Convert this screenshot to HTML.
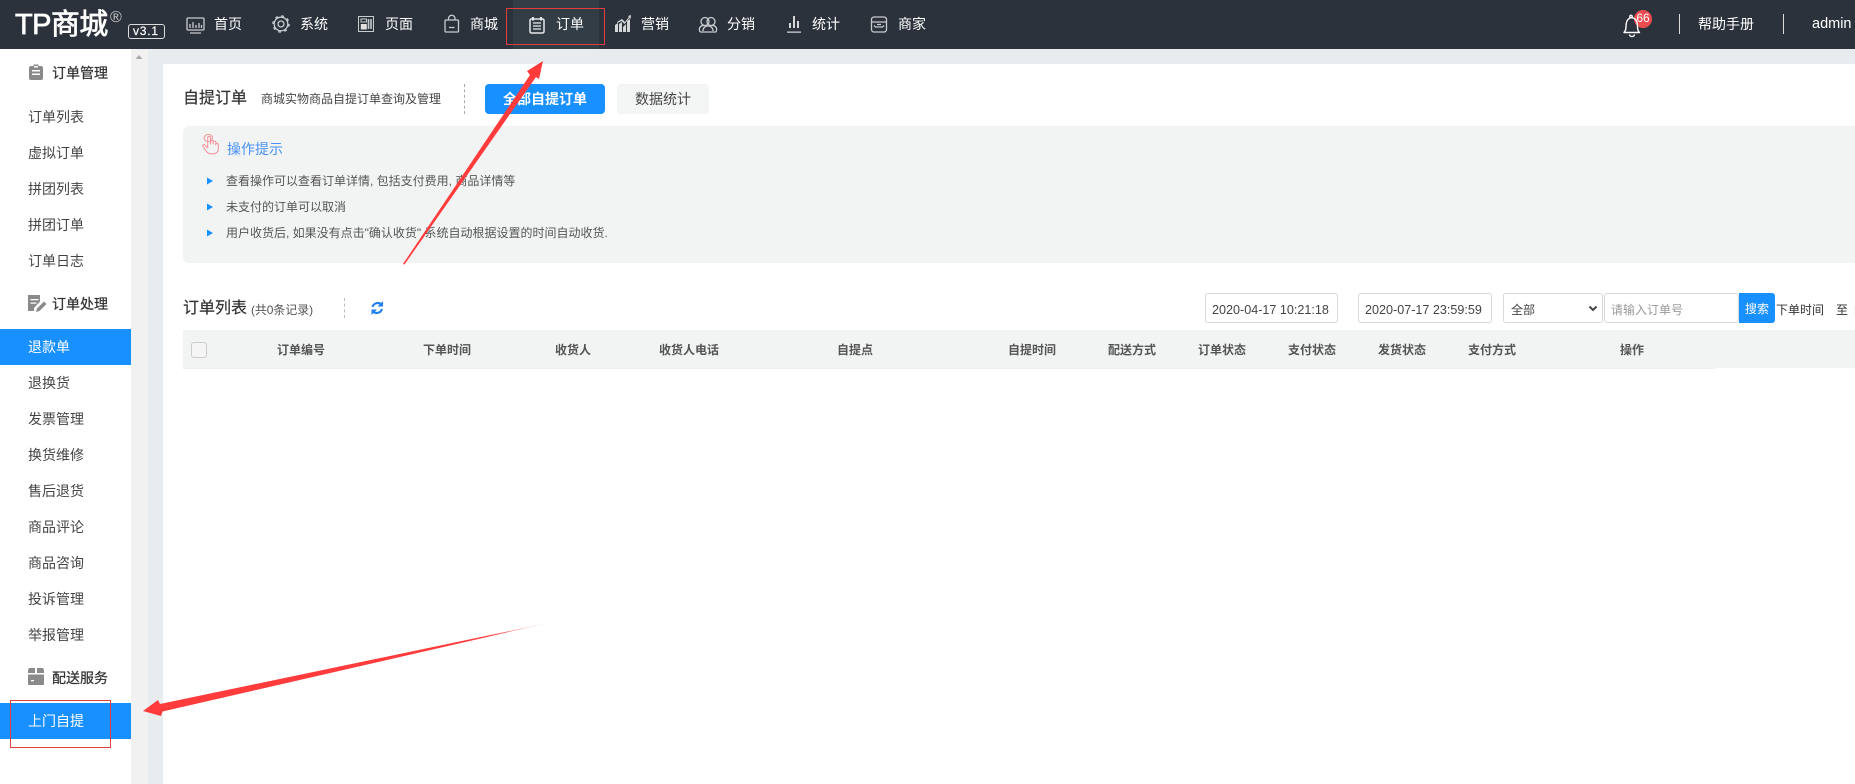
<!DOCTYPE html>
<html lang="zh-CN">
<head>
<meta charset="utf-8">
<title>自提订单</title>
<style>
html,body{margin:0;padding:0;width:1855px;height:784px;overflow:hidden;background:#fff}
body{position:relative;font-family:"Liberation Sans","Noto Sans CJK SC",sans-serif;color:#333}
div,span{position:absolute;white-space:nowrap}
.n{color:#fff;font-size:14px;line-height:20px;top:14px}
.s{font-size:14px;line-height:20px;left:28px;color:#444}
.h{font-size:14px;line-height:20px;left:52px;color:#333;-webkit-text-stroke:.25px #333}
.a{background:#1890ff;left:0;width:131px;height:36px}
.l{font-size:12px;line-height:16px;left:226px;color:#555}
.th{font-size:12px;line-height:16px;top:342px;color:#555;font-weight:700}
.i{height:28px;top:293px;border:1px solid #d9d9d9;border-radius:3px;background:#fff}
.d{font-size:12.6px;line-height:16px;top:302px;color:#444}
svg{position:absolute;left:0;top:0}
</style>
</head>
<body>
<div style="left:0;top:0;width:1855px;height:49px;background:#2b323b"></div>
<div style="left:513px;top:0;width:86px;height:49px;background:#323d46"></div>
<div style="left:131px;top:49px;width:17px;height:735px;background:#f1f1f1"></div>
<div style="left:148px;top:49px;width:15px;height:735px;background:#e9ecef"></div>
<div style="left:148px;top:49px;width:1707px;height:15px;background:#e9ecef"></div>

<span style="left:15px;top:7px;font-size:29px;line-height:36px;color:#fff;letter-spacing:-.6px;-webkit-text-stroke:.7px #fff">TP商城</span>
<span style="left:110px;top:9px;font-size:16px;line-height:18px;color:#ccc">®</span>
<div style="left:128px;top:24px;width:35px;height:13px;border:1px solid #ddd;border-radius:3px"></div>
<span style="left:133px;top:23px;font-size:12px;line-height:16px;color:#fff;letter-spacing:.8px;-webkit-text-stroke:.2px #fff">v3.1</span>

<span class="n" style="left:214px">首页</span>
<span class="n" style="left:300px">系统</span>
<span class="n" style="left:385px">页面</span>
<span class="n" style="left:470px">商城</span>
<span class="n" style="left:556px">订单</span>
<span class="n" style="left:641px">营销</span>
<span class="n" style="left:727px">分销</span>
<span class="n" style="left:812px">统计</span>
<span class="n" style="left:898px">商家</span>
<span class="n" style="left:1698px">帮助手册</span>
<span class="n" style="left:1812px;font-size:14.5px">admin</span>
<div style="left:1679px;top:14px;width:1px;height:20px;background:#ddd"></div>
<div style="left:1783px;top:14px;width:1px;height:20px;background:#ddd"></div>
<div style="left:1634px;top:10px;width:18px;height:18px;border-radius:50%;background:#ea4d50"></div>
<span style="left:1634px;top:11px;width:18px;text-align:center;font-size:12px;line-height:15px;color:#fff">66</span>

<span class="h" style="top:63px">订单管理</span>
<span class="s" style="top:107px">订单列表</span>
<span class="s" style="top:143px">虚拟订单</span>
<span class="s" style="top:179px">拼团列表</span>
<span class="s" style="top:215px">拼团订单</span>
<span class="s" style="top:251px">订单日志</span>
<span class="h" style="top:294px">订单处理</span>
<div class="a" style="top:329px"></div>
<span class="s" style="top:337px;color:#fff">退款单</span>
<span class="s" style="top:373px">退换货</span>
<span class="s" style="top:409px">发票管理</span>
<span class="s" style="top:445px">换货维修</span>
<span class="s" style="top:481px">售后退货</span>
<span class="s" style="top:517px">商品评论</span>
<span class="s" style="top:553px">商品咨询</span>
<span class="s" style="top:589px">投诉管理</span>
<span class="s" style="top:625px">举报管理</span>
<span class="h" style="top:668px">配送服务</span>
<div class="a" style="top:703px"></div>
<span class="s" style="top:711px;color:#fff">上门自提</span>

<span style="left:183px;top:88px;font-size:16px;line-height:22px;color:#333;-webkit-text-stroke:.2px #333">自提订单</span>
<span style="left:261px;top:91px;font-size:12px;line-height:16px;color:#444">商城实物商品自提订单查询及管理</span>
<div style="left:464px;top:84px;height:30px;width:0;border-left:1px dashed #aaa"></div>
<div style="left:485px;top:84px;width:120px;height:30px;background:#1890ff;border-radius:4px"></div>
<span style="left:485px;top:89px;width:120px;text-align:center;font-size:14px;line-height:20px;color:#fff;font-weight:700">全部自提订单</span>
<div style="left:617px;top:84px;width:92px;height:30px;background:#f4f5f5;border-radius:4px"></div>
<span style="left:617px;top:89px;width:92px;text-align:center;font-size:14px;line-height:20px;color:#444">数据统计</span>

<div style="left:183px;top:126px;width:1690px;height:137px;background:#f2f4f4;border-radius:6px"></div>
<span style="left:227px;top:139px;font-size:14px;line-height:20px;color:#4a90f5">操作提示</span>
<span class="l" style="top:173px">查看操作可以查看订单详情, 包括支付费用, 商品详情等</span>
<span class="l" style="top:199px">未支付的订单可以取消</span>
<span class="l" style="top:225px">用户收货后, 如果没有点击"确认收货",系统自动根据设置的时间自动收货.</span>

<span style="left:183px;top:298px;font-size:16px;line-height:22px;color:#333;-webkit-text-stroke:.2px #333">订单列表</span>
<span style="left:251px;top:302px;font-size:12px;line-height:16px;color:#555;letter-spacing:-.1px">(共0条记录)</span>
<div style="left:344px;top:298px;height:20px;width:0;border-left:1px dashed #bbb"></div>

<div class="i" style="left:1205px;width:131px"></div>
<span class="d" style="left:1212px">2020-04-17 10:21:18</span>
<div class="i" style="left:1358px;width:132px"></div>
<span class="d" style="left:1365px">2020-07-17 23:59:59</span>
<div class="i" style="left:1503px;width:98px"></div>
<span class="d" style="left:1511px;font-size:12px">全部</span>
<div class="i" style="left:1604px;width:133px"></div>
<span class="d" style="left:1611px;font-size:12px;color:#999">请输入订单号</span>
<div style="left:1739px;top:293px;width:36px;height:30px;background:#1890ff;border-radius:0 3px 3px 0"></div>
<span style="left:1745px;top:301px;font-size:12px;line-height:16px;color:#fff">搜索</span>
<span style="left:1776px;top:302px;font-size:12px;line-height:16px;color:#333">下单时间</span>
<span style="left:1836px;top:302px;font-size:12px;line-height:16px;color:#333">至</span>
<span style="left:1853px;top:302px;font-size:12px;line-height:16px;color:#333">自</span>

<div style="left:183px;top:330px;width:1672px;height:38px;background:#f2f4f4"></div>
<div style="left:183px;top:368px;width:1532px;height:1px;background:#f0eeee"></div>
<div style="left:191px;top:342px;width:14px;height:14px;border:1px solid #ccc;border-radius:3px;background:#f5f5f5"></div>
<span class="th" style="left:277px">订单编号</span>
<span class="th" style="left:423px">下单时间</span>
<span class="th" style="left:555px">收货人</span>
<span class="th" style="left:659px">收货人电话</span>
<span class="th" style="left:837px">自提点</span>
<span class="th" style="left:1008px">自提时间</span>
<span class="th" style="left:1108px">配送方式</span>
<span class="th" style="left:1198px">订单状态</span>
<span class="th" style="left:1288px">支付状态</span>
<span class="th" style="left:1378px">发货状态</span>
<span class="th" style="left:1468px">支付方式</span>
<span class="th" style="left:1620px">操作</span>

<div style="left:506px;top:8px;width:97px;height:35px;border:1px solid #e33d3d"></div>
<div style="left:10px;top:700px;width:99px;height:46px;border:1px solid #e33d3d"></div>

<svg width="1855" height="784" viewBox="0 0 1855 784">
<defs>
<linearGradient id="fade" gradientUnits="userSpaceOnUse" x1="548" y1="623" x2="490" y2="636">
<stop offset="0" stop-color="#ff3b3b" stop-opacity=".1"/><stop offset="1" stop-color="#ff3b3b"/>
</linearGradient>
</defs>
<!-- nav icons -->
<g fill="none" stroke="#c9cccf" stroke-width="1.3">
<rect x="187" y="18" width="17" height="12" rx="1"/>
<path d="M190 28v-4M193 28v-6M196 28v-3M199 28v-5M201.500 28v-3M190 33h11"/>
<circle cx="281" cy="24" r="6.800"/>
<circle cx="281" cy="24" r="8" stroke-width="1.500" stroke-dasharray="2.700 3.580"/>
<circle cx="281" cy="24" r="3"/>
<rect x="358.500" y="16.500" width="15" height="15" stroke-width="1"/>
<path d="M368.500 19v10M371 19v10" stroke-width="1.600"/>
<rect x="360.800" y="24" width="6" height="5.500" fill="#e0e0e0" stroke="none"/>
<rect x="361" y="19" width="5.500" height="3" stroke-width="1"/>
<rect x="445" y="20" width="13.500" height="12" rx="1"/>
<path d="M448.500 20v-1.500a3.200 3.200 0 0 1 6.500 0V20M449 27.500h5.500"/>
</g>
<g fill="none" stroke="#e6e8ea" stroke-width="1.500">
<rect x="530" y="19" width="14" height="14" rx="1.500"/>
<path d="M533 17v3.500M541 17v3.500" stroke-width="2"/>
<path d="M533 23h8M533 26h8M533 29h8" stroke-width="1.300"/>
</g>
<g fill="#d5d7d9" stroke="none">
<path d="M615 25l3-2v9h-3zM619 24l3-2v10h-3zM623 27l3-3v8h-3zM627 21l3-2v13h-3z"/>
<path d="M617 22l5-3 3 3 4-5-1-1 3-1-.5 4-1-1-5 6-3-3-4 2z"/>
<path d="M787 31.500h14v1.300h-14zM793 16h2v12h-2zM789 23h2v5h-2zM797 21h2v7h-2z"/>
</g>
<g fill="none" stroke="#c9cccf" stroke-width="1.300">
<circle cx="705" cy="21.500" r="4"/><circle cx="711" cy="21.500" r="4"/>
<path d="M700 32c-2-4 1-7 4-6.500M716 32c2-4-1-7-4-6.500M700 32h16M703 31c0-3 2-5 5-5s5 2 5 5"/>
<rect x="871.500" y="17" width="15" height="15" rx="2.500"/>
<path d="M872 22h14M874 25.500l1.500 1.500h7l1.500-1.500M877 24.500h4"/>
</g>
<!-- bell -->
<g fill="none" stroke="#fff" stroke-width="1.400" stroke-linejoin="round">
<path d="M1624 32.500c1.500-1.500 2-3 2-6 0-4.500 1.500-7.500 4-8.500 2.500-1 4 0 5.500 1.500 1.500 2 2 4.500 2 7 0 3 .5 4.800 2 6z"/>
<path d="M1629.500 34.500a2.500 2 0 0 0 5 0"/>
<circle cx="1631" cy="16.500" r="1.200"/>
</g>
<!-- sidebar icons -->
<g fill="#8a8a8a">
<path d="M29 68a2 2 0 0 1 2-2h2.500v-1.500h5V66H41a2 2 0 0 1 2 2v10a2 2 0 0 1-2 2H31a2 2 0 0 1-2-2z"/>
<path d="M28 295h12v6.500l-6 6.500v3h-6z"/>
<path d="M36 312l1-3.500 7-7 2.500 2.500-7 7-3.500 1z"/>
<path d="M28 671c0-1 .5-2 1-3h6v5h-7zM37 668h6c.5 1 1 2 1 3v2h-7zM28 674.500h16v9.500a1 1 0 0 1-1 1H29a1 1 0 0 1-1-1z"/>
<path d="M139 55l3.500 4h-7z" fill="#aaa"/>
</g>
<g fill="#fff">
<path d="M32 70h8v1.500h-8zM32 73.500h8v1.500h-8z"/><rect x="34" y="66" width="4" height="1.500"/>
<path d="M30.500 299h8v1.300h-8zM30.500 302.500h6v1.300h-6z"/>
<rect x="31" y="680" width="3" height="1.300"/>
</g>
<!-- hand -->
<g fill="none" stroke="#f48f96" stroke-width=".9" stroke-linecap="round" stroke-linejoin="round" transform="translate(202 134) scale(1.150 1) translate(-202 -134)">
<circle cx="207.500" cy="138" r="3.600"/>
<path d="M207 143v-5.500a1.200 1.200 0 0 1 2.400 0V144l.1-2.500a1.100 1.100 0 0 1 2.200 0v2.500l.1-1.800a1.100 1.100 0 0 1 2.200 0V145l.1-1a1.100 1.100 0 0 1 2.100 0v5c0 3-2 5-5.500 5-3 0-4.500-1.500-5.500-3.500l-2.400-4.500c-.6-1.200 1-2 1.800-1l2.300 2.800z"/>
</g>
<!-- list triangles -->
<g fill="#1890ff">
<path d="M207 177.500l6 3.500-6 3.500zM207 203.500l6 3.500-6 3.500zM207 229.500l6 3.500-6 3.500z"/>
</g>
<!-- refresh -->
<g fill="none" stroke="#1f7ff0" stroke-width="2.200">
<path d="M372.500 307a5.500 5.500 0 0 1 9-2.500"/><path d="M382 309a5.500 5.500 0 0 1-9 2.500"/>
</g>
<path d="M383 301v5.500h-5.500zM371.500 315v-5.500h5.500z" fill="#1f7ff0"/>
<!-- select chevron -->
<path d="M1589.500 306.500l3.500 3.500 3.500-3.500" fill="none" stroke="#444" stroke-width="2"/>
<!-- arrows -->
<path d="M403 264L530 75 527 71 543 61 539 79 536 77 404.500 264.500z" fill="#ff3b3b"/>
<path d="M548 623L162.500 711.500 161 716 143 711 158 700 160 704z" fill="url(#fade)"/>
</svg>
</body>
</html>
